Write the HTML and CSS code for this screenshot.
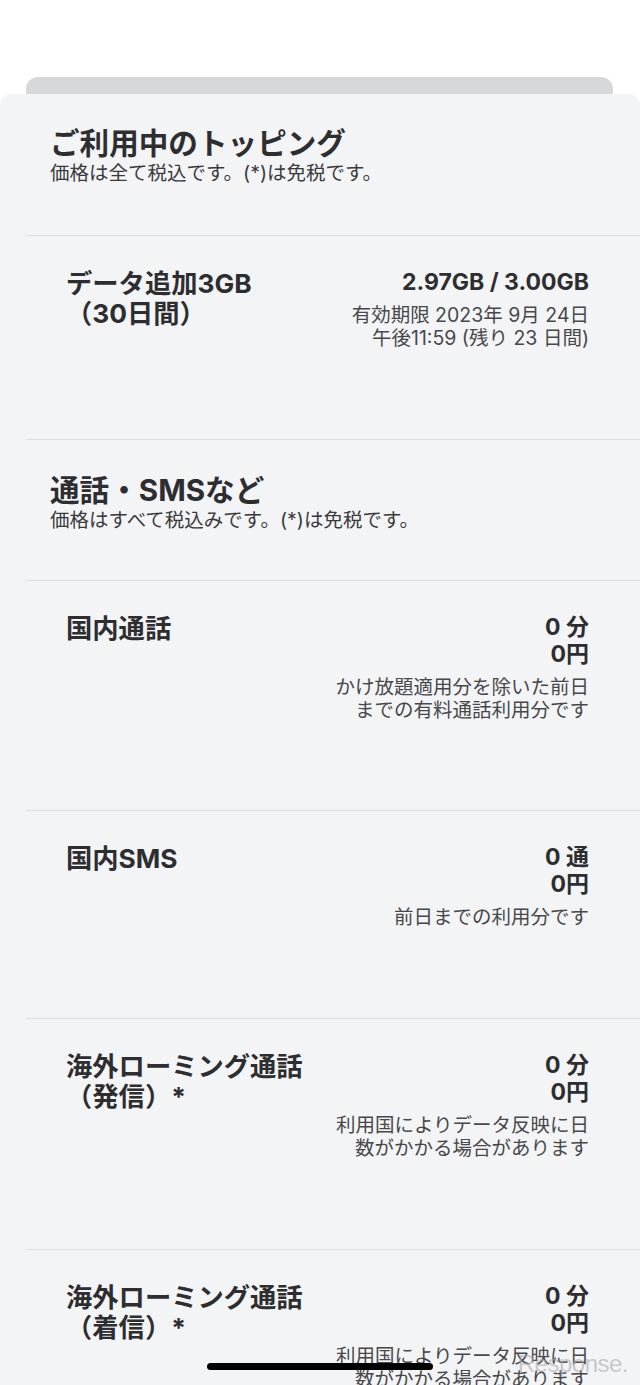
FILE: index.html
```html
<!DOCTYPE html>
<html lang="ja">
<head>
<meta charset="utf-8">
<title>ご利用中のトッピング</title>
<link rel="stylesheet" href="styles.css">
</head>
<body>
<div class="screen">
  <div class="back-card"></div>
  <div class="sheet">
    <div class="section-head first">
      <h2 class="title">ご利用中のトッピング</h2>
      <p class="subtitle">価格は全て税込です。(*)は免税です。</p>
    </div>
    <div class="list">
      <div class="row">
        <div class="label">データ追加3GB<br>（30日間）</div>
        <div class="values">
          <div class="value">2.97GB / 3.00GB</div>
          <div class="desc">有効期限 2023年 9月 24日<br>午後11:59 (残り 23 日間)</div>
        </div>
      </div>
      <div class="row head-row">
        <div class="section-head">
          <h2 class="title">通話・SMSなど</h2>
          <p class="subtitle">価格はすべて税込みです。(*)は免税です。</p>
        </div>
      </div>
      <div class="row">
        <div class="label">国内通話</div>
        <div class="values">
          <div class="value">0 分</div>
          <div class="value">0円</div>
          <div class="desc">かけ放題適用分を除いた前日<br>までの有料通話利用分です</div>
        </div>
      </div>
      <div class="row">
        <div class="label">国内SMS</div>
        <div class="values">
          <div class="value">0 通</div>
          <div class="value">0円</div>
          <div class="desc">前日までの利用分です</div>
        </div>
      </div>
      <div class="row">
        <div class="label">海外ローミング通話<br>（発信）*</div>
        <div class="values">
          <div class="value">0 分</div>
          <div class="value">0円</div>
          <div class="desc">利用国によりデータ反映に日<br>数がかかる場合があります</div>
        </div>
      </div>
      <div class="row">
        <div class="label">海外ローミング通話<br>（着信）*</div>
        <div class="values">
          <div class="value">0 分</div>
          <div class="value">0円</div>
          <div class="desc">利用国によりデータ反映に日<br>数がかかる場合があります</div>
        </div>
      </div>
    </div>
  </div>
  <div class="home-indicator"></div>
  <div class="watermark">Response.</div>
</div>
</body>
</html>
```

FILE: styles.css
```css
* { box-sizing: border-box; }
html, body {
  margin: 0;
  padding: 0;
  background: #ffffff;
}
body {
  font-family: "Inter", "Noto Sans CJK JP", sans-serif;
  color: #2e2e31;
}
.screen {
  position: relative;
  width: 640px;
  height: 1385px;
  overflow: hidden;
  padding-top: 77px;
}
.back-card {
  height: 17px;
  margin: 0 27px 0 26px;
  background: #d7d8da;
  border-radius: 12px 12px 0 0;
}
.sheet {
  background: #f3f4f6;
  border-radius: 12px 12px 0 0;
  min-height: 1300px;
}
.section-head {
  padding: 32px 0 50px 50px;
}
.head-row .section-head {
  padding: 33px 0 48px 24px;
}
.title {
  margin: 0;
  font-size: 29.6px;
  line-height: 35px;
  font-weight: 700;
  color: #2e2e31;
}
.subtitle {
  margin: 0;
  font-size: 19.5px;
  line-height: 24px;
  color: #3a3a3d;
}
.list {
  margin-left: 26px;
}
.row {
  display: flex;
  justify-content: space-between;
  align-items: flex-start;
  border-top: 1px solid #dcdde0;
  padding: 33px 51px 88.7px 40px;
}
.row.head-row {
  padding: 0;
  display: block;
}
.label {
  font-size: 26.3px;
  line-height: 30px;
  font-weight: 700;
  color: #2e2e31;
  white-space: nowrap;
}
.values {
  text-align: right;
  white-space: nowrap;
}
.value {
  font-size: 23px;
  line-height: 27px;
  font-weight: 700;
  color: #2e2e31;
}
.desc {
  margin-top: 8px;
  font-size: 19.5px;
  line-height: 23px;
  color: #48484b;
}
.home-indicator {
  position: absolute;
  left: 207px;
  top: 1363px;
  width: 226px;
  height: 7px;
  border-radius: 4px;
  background: #000;
}
.watermark {
  position: absolute;
  right: 12px;
  top: 1350px;
  font-family: "Liberation Sans", sans-serif;
  font-size: 24px;
  color: rgba(170, 170, 170, 0.6);
  letter-spacing: -0.5px;
}
```
